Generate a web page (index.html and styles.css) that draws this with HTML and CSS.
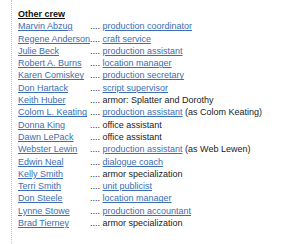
FILE: index.html
```html
<!DOCTYPE html>
<html>
<head>
<meta charset="utf-8">
<link rel="stylesheet" href="styles.css">
</head>
<body>
<div class="panel">
  <div class="head">Other crew</div>
  <div class="crew">
    <a class="name" href="#">Marvin Abzug</a><span class="role">.... <a href="#">production coordinator</a></span>
    <a class="name" href="#">Regene Anderson</a><span class="role">.... <a href="#">craft service</a></span>
    <a class="name" href="#">Julie Beck</a><span class="role">.... <a href="#">production assistant</a></span>
    <a class="name" href="#">Robert A. Burns</a><span class="role">.... <a href="#">location manager</a></span>
    <a class="name" href="#">Karen Comiskey</a><span class="role">.... <a href="#">production secretary</a></span>
    <a class="name" href="#">Don Hartack</a><span class="role">.... <a href="#">script supervisor</a></span>
    <a class="name" href="#">Keith Huber</a><span class="role">.... armor: Splatter and Dorothy</span>
    <a class="name" href="#">Colom L. Keating</a><span class="role">.... <a href="#">production assistant</a> (as Colom Keating)</span>
    <a class="name" href="#">Donna King</a><span class="role">.... office assistant</span>
    <a class="name" href="#">Dawn LePack</a><span class="role">.... office assistant</span>
    <a class="name" href="#">Webster Lewin</a><span class="role">.... <a href="#">production assistant</a> (as Web Lewen)</span>
    <a class="name" href="#">Edwin Neal</a><span class="role">.... <a href="#">dialogue coach</a></span>
    <a class="name" href="#">Kelly Smith</a><span class="role">.... armor specialization</span>
    <a class="name" href="#">Terri Smith</a><span class="role">.... <a href="#">unit publicist</a></span>
    <a class="name" href="#">Don Steele</a><span class="role">.... <a href="#">location manager</a></span>
    <a class="name" href="#">Lynne Stowe</a><span class="role">.... <a href="#">production accountant</a></span>
    <a class="name" href="#">Brad Tierney</a><span class="role">.... armor specialization</span>
  </div>
</div>
</body>
</html>
```
FILE: styles.css
```css
html, body {
  margin: 0;
  padding: 0;
  background: #fff;
}
body {
  font-family: "Liberation Sans", Arial, sans-serif;
  font-size: 9px;
  color: #222;
  width: 300px;
  height: 244px;
  overflow: hidden;
}
.panel {
  margin-left: 11px;
  border-left: 1px dotted #c4c4c4;
  padding: 8px 0 0 6px;
  height: 244px;
  box-sizing: border-box;
}
.head {
  font-weight: bold;
  text-decoration: underline;
  color: #111;
  line-height: 12.3px;
}
.crew {
  display: grid;
  grid-template-columns: 72px auto;
  grid-auto-rows: 12.3px;
  line-height: 12.3px;
  white-space: nowrap;
}
.crew a {
  color: #3b6eb4;
  text-decoration: underline;
}
.role {
  color: #222;
}
```
